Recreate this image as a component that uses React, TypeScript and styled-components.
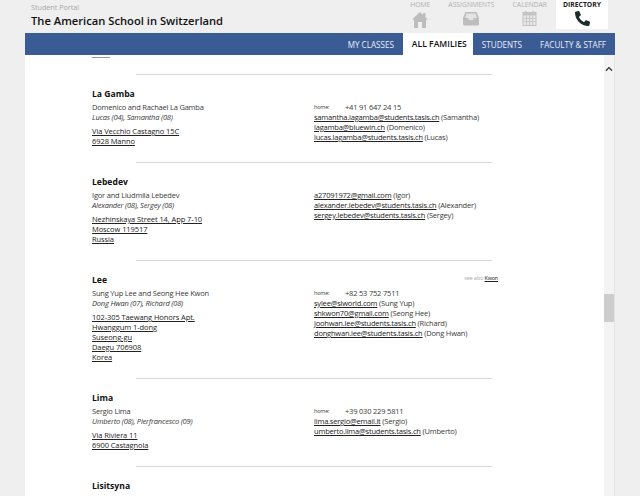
import styled, { createGlobalStyle } from 'styled-components';
import { FaPhoneAlt, FaChevronUp } from 'react-icons/fa';

interface familyProps {
  name: string;
  parents: string;
  kids: string;
  address: string[];
  home?: string;
  emails: [string, string][];
  seeAlso?: string;
  height: number;
}

const FAMILIES: familyProps[] = [
  {
    name: 'La Gamba',
    parents: 'Domenico and Rachael La Gamba',
    kids: 'Lucas (04), Samantha (08)',
    address: ['Via Vecchio Castagno 15C', '6928 Manno'],
    home: '+41 91 647 24 15',
    emails: [
      ['samantha.lagamba@students.tasis.ch', 'Samantha'],
      ['lagamba@bluewin.ch', 'Domenico'],
      ['lucas.lagamba@students.tasis.ch', 'Lucas'],
    ],
    height: 88,
  },
  {
    name: 'Lebedev',
    parents: 'Igor and Liudmila Lebedev',
    kids: 'Alexander (08), Sergey (08)',
    address: ['Nezhinskaya Street 14, App 7-10', 'Moscow 119517', 'Russia'],
    emails: [
      ['a27091972@gmail.com', 'Igor'],
      ['alexander.lebedev@students.tasis.ch', 'Alexander'],
      ['sergey.lebedev@students.tasis.ch', 'Sergey'],
    ],
    height: 98,
  },
  {
    name: 'Lee',
    parents: 'Sung Yup Lee and Seong Hee Kwon',
    kids: 'Dong Hwan (07), Richard (08)',
    address: ['102-305 Taewang Honors Apt.', 'Hwanggum 1-dong', 'Suseong-gu', 'Daegu 706908', 'Korea'],
    home: '+82 53 752 7511',
    emails: [
      ['sylee@slworld.com', 'Sung Yup'],
      ['shkwon70@gmail.com', 'Seong Hee'],
      ['joohwan.lee@students.tasis.ch', 'Richard'],
      ['donghwan.lee@students.tasis.ch', 'Dong Hwan'],
    ],
    seeAlso: 'Kwon',
    height: 118,
  },
  {
    name: 'Lima',
    parents: 'Sergio Lima',
    kids: 'Umberto (08), Pierfrancesco (09)',
    address: ['Via Riviera 11', '6900 Castagnola'],
    home: '+39 030 229 5811',
    emails: [
      ['lima.sergio@email.it', 'Sergio'],
      ['umberto.lima@students.tasis.ch', 'Umberto'],
    ],
    height: 88,
  },
];

function HomeIcon() {
  return (
    <svg width="18" height="18" viewBox="0 0 18 18" fill="#bdbdbd">
      <path d="M9 1 L17 8.5 L15 8.5 L15 17 L11 17 L11 11 L7 11 L7 17 L3 17 L3 8.5 L1 8.5 Z" />
      <rect x="12" y="2" width="2.5" height="4" />
    </svg>
  );
}

function InboxIcon() {
  return (
    <svg width="16" height="15" viewBox="0 0 16 15">
      <path d="M2.5 1 H13.5 L16 7 V13 Q16 14.5 14.5 14.5 H1.5 Q0 14.5 0 13 V7 Z" fill="#bdbdbd" />
      <path d="M3.5 2.5 H12.5 L14 7 H2 Z" fill="#e4e4e4" />
      <rect x="5.5" y="7" width="5" height="2" fill="#e4e4e4" />
    </svg>
  );
}

function CalendarIcon() {
  return (
    <svg width="15" height="15" viewBox="0 0 15 15" fill="#c4c4c4">
      <rect x="0.5" y="1" width="14" height="14" />
      <rect x="3" y="0" width="1.5" height="2" />
      <rect x="10.5" y="0" width="1.5" height="2" />
      <rect x="1.5" y="4.5" width="12" height="9.5" fill="#e6e6e6" />
      <path d="M1.5 7.5h12M1.5 10.5h12M4.5 4.5V14M7.5 4.5V14M10.5 4.5V14" stroke="#c4c4c4" strokeWidth="0.8" />
    </svg>
  );
}

function Family({ name, parents, kids, address, home, emails, seeAlso, height }: familyProps) {
  return (
    <FamilyContainer height={height}>
      {seeAlso && (
        <SeeAlso>
          see also <a>{seeAlso}</a>
        </SeeAlso>
      )}
      <FamilyName>{name}</FamilyName>
      <FamilyColumns>
        <div>
          <div>{parents}</div>
          <Kids>{kids}</Kids>
          <Address>
            {address.map((line) => (
              <div key={line}>
                <a>{line}</a>
              </div>
            ))}
          </Address>
        </div>
        <div>
          {home && (
            <HomeRow>
              <HomeLabel>home:</HomeLabel>
              {home}
            </HomeRow>
          )}
          {emails.map(([email, who]) => (
            <div key={email}>
              <a>{email}</a> ({who})
            </div>
          ))}
        </div>
      </FamilyColumns>
    </FamilyContainer>
  );
}

function App() {
  return (
    <Page>
      <GlobalStyle />
      <Header>
        <Brand>
          <PortalLabel>Student Portal</PortalLabel>
          <SchoolName>The American School in Switzerland</SchoolName>
        </Brand>
        <TopTabs>
          <TopTab>
            HOME
            <HomeIcon />
          </TopTab>
          <TopTab>
            ASSIGNMENTS
            <InboxIcon />
          </TopTab>
          <TopTab>
            CALENDAR
            <CalendarIcon />
          </TopTab>
          <TopTab active>
            DIRECTORY
            <FaPhoneAlt size={15} color="#1c2c2c" />
          </TopTab>
        </TopTabs>
      </Header>
      <NavBar>
        <NavItem>MY CLASSES</NavItem>
        <NavItem active>ALL FAMILIES</NavItem>
        <NavItem>STUDENTS</NavItem>
        <NavItem>FACULTY &amp; STAFF</NavItem>
      </NavBar>
      <Body>
        <List>
          <TopStub />
          {FAMILIES.map((family) => (
            <Family key={family.name} {...family} />
          ))}
          <FamilyContainer height={30}>
            <FamilyName>Lisitsyna</FamilyName>
          </FamilyContainer>
        </List>
        <ScrollTrack>
          <FaChevronUp size={8} color="#333" />
          <ScrollThumb />
        </ScrollTrack>
      </Body>
    </Page>
  );
}

const GlobalStyle = createGlobalStyle`
  html, body {
    margin: 0;
    height: 496px;
    overflow: hidden;
    background: #efefef;
    font-family: 'Open Sans', sans-serif;
  }
`;

const Page = styled.div`
  width: 590px;
  height: 496px;
  margin-left: 25px;
  display: flex;
  flex-direction: column;
  overflow: hidden;
`;

const Header = styled.div`
  height: 33px;
  display: flex;
  justify-content: space-between;
`;

const Brand = styled.div`
  padding-left: 6px;
`;

const PortalLabel = styled.div`
  margin-top: 2px;
  font-size: 7.2px;
  line-height: 10px;
  color: #a8a8a8;
`;

const SchoolName = styled.div`
  margin-top: 2px;
  font-size: 11.2px;
  line-height: 14px;
  font-weight: 600;
  color: #111;
`;

const TopTabs = styled.div`
  display: flex;
  align-items: flex-start;
  margin-right: 7px;
`;

const TopTab = styled.div<{ active?: boolean }>`
  height: 29px;
  width: ${(props) => (props.active ? '52px' : 'auto')};
  margin-left: ${(props) => (props.active ? '9px' : '18px')};
  display: flex;
  flex-direction: column;
  align-items: center;
  gap: 3px;
  padding-top: 1px;
  box-sizing: border-box;
  font-size: 6.8px;
  line-height: 7px;
  font-weight: ${(props) => (props.active ? 700 : 400)};
  color: ${(props) => (props.active ? '#222' : '#b0b0b0')};
  background: ${(props) => (props.active ? '#fff' : 'transparent')};
`;

const NavBar = styled.div`
  height: 22px;
  flex-shrink: 0;
  background: #3b5b95;
  display: flex;
  justify-content: flex-end;
`;

const NavItem = styled.div<{ active?: boolean }>`
  display: flex;
  align-items: center;
  width: ${(props) => (props.active ? '70px' : 'auto')};
  box-sizing: border-box;
  padding: 0 9px;
  font-size: ${(props) => (props.active ? '8.6px' : '8.1px')};
  font-weight: ${(props) => (props.active ? 600 : 400)};
  white-space: nowrap;
  color: ${(props) => (props.active ? '#111' : '#e8edf5')};
  background: ${(props) => (props.active ? '#fff' : 'transparent')};
`;

const Body = styled.div`
  flex: 1;
  display: flex;
  min-height: 0;
  background: #fff;
`;

const List = styled.div`
  flex: 1;
  padding-left: 67px;
  overflow: hidden;
  font-size: 7.5px;
  letter-spacing: -0.2px;
  line-height: 10px;
  color: #3a3a3a;
  white-space: nowrap;

  a {
    color: #222;
    text-decoration: underline;
  }
`;

const TopStub = styled.div`
  width: 18px;
  height: 1px;
  background: #999;
  margin-top: 2px;
  margin-bottom: 16px;
`;

const FamilyContainer = styled.div<{ height: number }>`
  position: relative;
  width: 400px;
  height: ${(props) => props.height}px;
  box-sizing: border-box;
  padding-top: 13px;
  border-top: 1px solid #d8d8d8;
  border-image: linear-gradient(to right, transparent 45px, #d8d8d8 45px, #d8d8d8 400px) 1;
`;

const FamilyName = styled.div`
  font-size: 8.6px;
  letter-spacing: 0;
  line-height: 12px;
  font-weight: 700;
  color: #111;
`;

const FamilyColumns = styled.div`
  display: grid;
  grid-template-columns: 222px 1fr;
  margin-top: 2px;
`;

const Kids = styled.div`
  font-style: italic;
`;

const Address = styled.div`
  margin-top: 4px;
  letter-spacing: -0.08px;
`;

const HomeRow = styled.div`
  display: flex;
`;

const HomeLabel = styled.span`
  width: 31px;
  font-size: 5.5px;
`;

const SeeAlso = styled.div`
  position: absolute;
  top: 12px;
  right: -6px;
  font-size: 5.5px;
  color: #aaa;
`;

const ScrollTrack = styled.div`
  position: relative;
  width: 11px;
  display: flex;
  justify-content: center;
  padding-top: 10px;
  box-sizing: border-box;
  background: #f3f3f3;
  border-right: 1px solid #e4e4e4;
`;

const ScrollThumb = styled.div`
  position: absolute;
  top: 239px;
  left: 0;
  width: 10px;
  height: 28px;
  background: #cdcdcd;
`;

export default App;
